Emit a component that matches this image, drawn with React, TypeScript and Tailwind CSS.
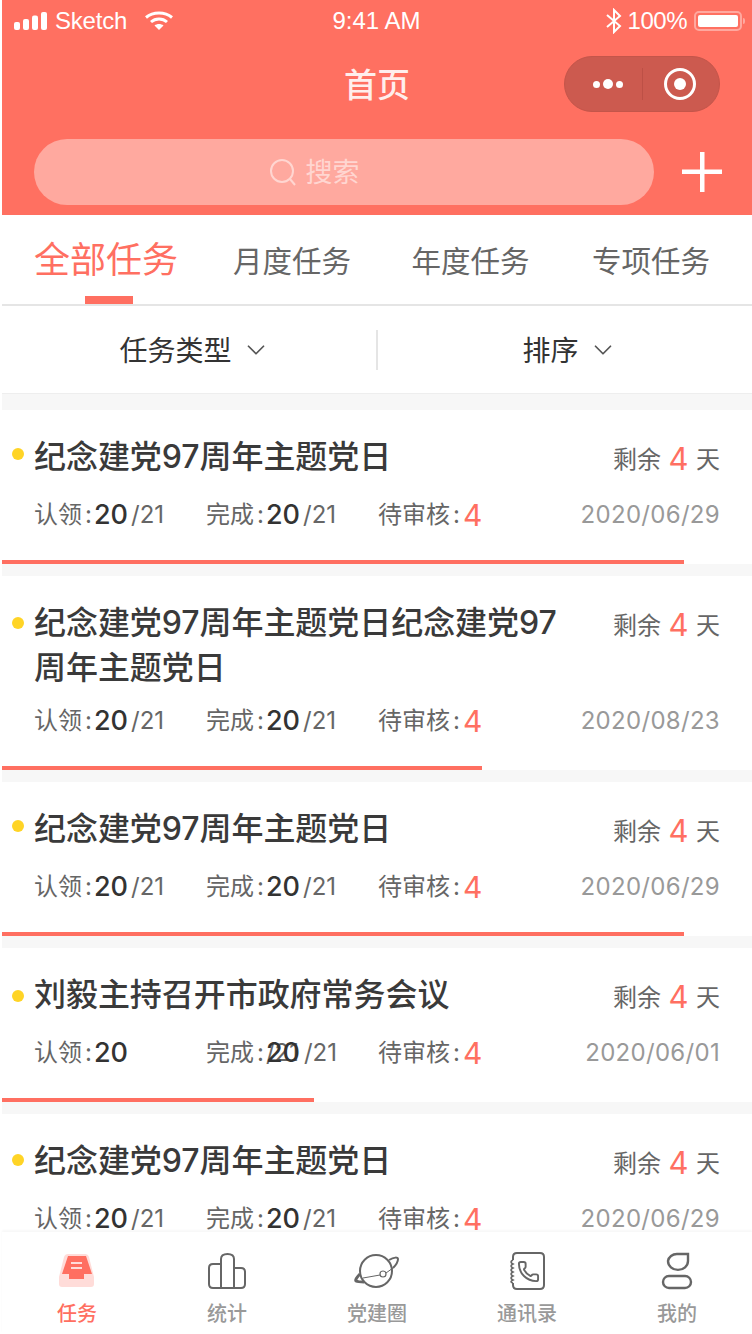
import { ChevronDown, Phone } from "lucide-react";

const fontStack = { fontFamily: '"Inter", "Noto Sans CJK SC", sans-serif' };

interface Task {
  id: number;
  title: string;
  date: string;
  barClass: string;
  dotClass: string;
  glitch?: boolean;
}

const tasks: Task[] = [
  { id: 1, title: "纪念建党97周年主题党日", date: "2020/06/29", barClass: "w-[682px]", dotClass: "top-[38px]" },
  { id: 2, title: "纪念建党97周年主题党日纪念建党97周年主题党日", date: "2020/08/23", barClass: "w-[480px]", dotClass: "top-[41px]" },
  { id: 3, title: "纪念建党97周年主题党日", date: "2020/06/29", barClass: "w-[682px]", dotClass: "top-[38px]" },
  { id: 4, title: "刘毅主持召开市政府常务会议", date: "2020/06/01", barClass: "w-[312px]", dotClass: "top-[42px]", glitch: true },
  { id: 5, title: "纪念建党97周年主题党日", date: "2020/06/29", barClass: "w-[682px]", dotClass: "top-[40px]" },
];

function StatusBar() {
  return (
    <div className="flex h-[40px] items-center justify-between pt-[2px] pl-[12px] pr-[7px] text-[24px] text-white" style={{ fontFamily: '"Liberation Sans", sans-serif' }}>
      <div className="flex w-[257px] items-center">
        <svg width="34" height="18" viewBox="0 0 34 18" fill="white">
          <rect x="0" y="10" width="6" height="8" rx="2" />
          <rect x="9" y="7" width="6" height="11" rx="2" />
          <rect x="18" y="3.5" width="6" height="14.5" rx="2" />
          <rect x="27" y="0" width="6" height="18" rx="2" />
        </svg>
        <span className="ml-[7px] tracking-[-0.2px]">Sketch</span>
        <svg className="ml-[17px]" width="30" height="20" viewBox="0 0 30 20" fill="none" stroke="white" strokeWidth="3">
          <path d="M2 6.5C9 0.5 21 0.5 28 6.5" />
          <path d="M7 11C11.5 7 18.5 7 23 11" />
          <path d="M15 19L10.5 14.5C13 12.5 17 12.5 19.5 14.5Z" fill="white" stroke="none" />
        </svg>
      </div>
      <span>9:41 AM</span>
      <div className="flex w-[263px] items-center justify-end">
        <svg width="18" height="26" viewBox="0 0 18 26" fill="none" stroke="white" strokeWidth="2">
          <path d="M2 7L15 18L9 24V2L15 8L2 19" />
        </svg>
        <span className="ml-[5px] tracking-[-0.5px]">100%</span>
        <div className="ml-[7px] flex h-[20px] w-[48px] items-center rounded-[5px] border-2 border-[#ffa89f] p-[2px]">
          <div className="h-full w-full rounded-[2px] bg-white" />
        </div>
        <div className="ml-[1px] h-[6px] w-[2px] rounded-r bg-[#ffa89f]" />
      </div>
    </div>
  );
}

function Capsule() {
  return (
    <div className="flex h-[56px] w-[156px] items-center rounded-full border border-[#c4554a] bg-[#cc5a4f]">
      <div className="flex w-[77px] items-center justify-end gap-[3px] pr-[19px]">
        <span className="h-[7px] w-[7px] rounded-full bg-white" />
        <span className="h-[10px] w-[10px] rounded-full bg-white" />
        <span className="h-[7px] w-[7px] rounded-full bg-white" />
      </div>
      <div className="h-[32px] w-px bg-[#bd5046]" />
      <div className="flex flex-1 justify-center pr-[2px]">
        <div className="flex h-[32px] w-[32px] items-center justify-center rounded-full border-[3px] border-white">
          <span className="h-[12px] w-[12px] rounded-full bg-white" />
        </div>
      </div>
    </div>
  );
}

function Header() {
  return (
    <header className="bg-[#ff7061]">
      <StatusBar />
      <div className="grid h-[88px] grid-cols-[1fr_auto_1fr] items-center px-[32px]">
        <div />
        <h1 className="pt-[4px] text-[33px] font-medium text-[#ffeeec]">首页</h1>
        <div className="flex justify-end">
          <Capsule />
        </div>
      </div>
      <div className="mt-[11px] flex h-[66px] items-center pl-[32px]">
        <div className="flex h-[66px] w-[620px] items-center justify-center rounded-full bg-[#ffa99f] pr-[58px]">
          <svg className="mr-[9px] -ml-[2px]" width="28" height="28" viewBox="0 0 28 28" fill="none" stroke="#ffd6d1" strokeWidth="2">
            <circle cx="13" cy="13" r="11" />
            <path d="M21 21L26 27" />
          </svg>
          <span className="pt-[3px] text-[27px] text-[#ffd6d1]">搜索</span>
        </div>
        <svg className="ml-[28px]" width="40" height="40" viewBox="0 0 40 40" fill="white">
          <rect x="0" y="17.5" width="40" height="4.5" />
          <rect x="18" y="0" width="4.5" height="40" />
        </svg>
      </div>
      <div className="h-[10px]" />
    </header>
  );
}

function Tabs() {
  return (
    <nav className="flex h-[91px] items-center gap-[60.5px] border-b-2 border-[#e5e5e5] pl-[32px] text-[29.5px] text-[#666]">
      <div className="relative flex h-full w-[144px] items-center pt-[1px] text-[36px] whitespace-nowrap text-[#ff6f61]">
        全部任务
        <span className="absolute bottom-0 left-[51px] h-[8px] w-[48px] bg-[#ff6f61]" />
      </div>
      <span className="-ml-[5.5px] pt-[3px] whitespace-nowrap">月度任务</span>
      <span className="pt-[3px] whitespace-nowrap">年度任务</span>
      <span className="ml-[2px] pt-[3px] whitespace-nowrap">专项任务</span>
    </nav>
  );
}

function Filters() {
  return (
    <div className="flex h-[88px] items-center border-b border-[#eeeeee] text-[28px] text-[#333]">
      <div className="flex w-[374px] items-center justify-center gap-[9px] pl-[12px]">
        <span className="pt-[2px]">任务类型</span>
        <ChevronDown className="h-[30px] w-[30px] text-[#555]" strokeWidth={1.4} />
      </div>
      <div className="h-[40px] w-[2px] bg-[#e5e5e5]" />
      <div className="flex w-[374px] items-center justify-center gap-[9px] pl-[10px]">
        <span className="pt-[2px]">排序</span>
        <ChevronDown className="h-[30px] w-[30px] text-[#555]" strokeWidth={1.4} />
      </div>
    </div>
  );
}

function Stat({ label, hideTotal, doubled }: { label: string; hideTotal?: boolean; doubled?: boolean }) {
  return (
    <div className="flex items-center text-[24px] text-[#666]">
      <span className="whitespace-nowrap">
        {label}
        <span className="ml-[3px]">:</span>
      </span>
      {doubled ? (
        <span className="relative ml-[2px] whitespace-nowrap text-[#666]">
          <span className="mr-[5px]">/21</span>/21
          <span className="absolute top-1/2 left-0 -translate-y-1/2 text-[27px] font-medium text-[#333]">20</span>
        </span>
      ) : (
        <>
          <span className="ml-[2px] text-[27px] font-medium text-[#333]">20</span>
          {!hideTotal && <span className="ml-[3px] whitespace-nowrap">/21</span>}
        </>
      )}
    </div>
  );
}

function TaskCard({ task }: { task: Task }) {
  return (
    <article className="relative bg-white">
      <span className={`absolute left-[10px] h-[12px] w-[12px] rounded-full bg-[#ffd426] ${task.dotClass}`} />
      <div className="flex items-start justify-between pt-[24px] pr-[32px] pl-[32px]">
        <h2 className="min-h-[50px] w-[530px] text-[32px] leading-[45px] font-medium tracking-[-0.05px] text-[#3a3a3a]">{task.title}</h2>
        <div className="mt-[3px] flex items-center text-[24px] leading-[45px] whitespace-nowrap text-[#666]">
          剩余<span className="mx-[7.5px] -mt-[3px] text-[31px] text-[#ff6f61]">4</span>天
        </div>
      </div>
      <div className="mt-[11px] flex h-[40px] items-center pr-[32px] pl-[32px]">
        <div className="w-[172px]">
          <Stat label="认领" hideTotal={task.glitch} />
        </div>
        <div className="w-[172px]">
          <Stat label="完成" doubled={task.glitch} />
        </div>
        <div className="flex items-center text-[24px] text-[#666]">
          <span className="whitespace-nowrap">
            待审核<span className="ml-[3px]">:</span>
          </span>
          <span className="ml-[3px] text-[30px] text-[#ff6f61]">4</span>
        </div>
        <span className="ml-auto text-[24px] tracking-[0.3px] text-[#999]">{task.date}</span>
      </div>
      <div className={`mt-[25px] h-[4px] bg-[#ff6f61] ${task.barClass}`} />
    </article>
  );
}

function TaskIcon() {
  return (
    <svg width="36" height="36" viewBox="0 0 36 36">
      <path d="M9 1H26Q29 1 30 4L35 24V31Q35 34 32 34H3Q0 34 0 31V24L5 4Q6 1 9 1Z" fill="#ffdcd9" />
      <path d="M9 3H27L33 21H25V26H10V21H3Z" fill="#ff6f61" />
      <rect x="12" y="9" width="11" height="2" fill="#ffdcd9" />
      <rect x="12" y="14" width="11" height="2" fill="#ffdcd9" />
    </svg>
  );
}

function StatsIcon() {
  return (
    <svg width="40" height="36" viewBox="0 0 40 36" fill="none" stroke="#666" strokeWidth="2">
      <path d="M14 35V6Q14 1 20.5 1Q27 1 27 6V35" />
      <path d="M14 11H6Q2 11 2 15V31Q2 35 6 35H34Q38 35 38 31V19Q38 15 34 15H27" />
    </svg>
  );
}

function PlanetIcon() {
  return (
    <svg width="46" height="36" viewBox="0 0 46 36" fill="none" stroke="#666" strokeWidth="2">
      <circle cx="22" cy="18" r="16" />
      <path d="M35 7C40 4 44 4 44 6C44 9 42 12 39 15" />
      <path d="M6 21C3 24 1 27 2 28C4 29 7 29 10 29" strokeWidth="3" />
      <path d="M9 25L26 22M32 20L39 15" strokeWidth="1" />
      <circle cx="29" cy="21" r="3" strokeWidth="1.2" fill="white" />
    </svg>
  );
}

function ContactsIcon() {
  return (
    <svg width="38" height="38" viewBox="0 0 38 38" fill="none" stroke="#666" strokeWidth="2">
      <path d="M5 8V5Q5 1 9 1H32Q36 1 36 5V33Q36 37 32 37H9Q5 37 5 33V31" />
      <path d="M5 8Q1 10 5 12Q1 14 5 16Q1 18 5 20Q1 22 5 24Q1 26 5 28Q1 30 5 31" strokeWidth="1.6" />
      <Phone x="9" y="8" width="23" height="23" stroke="#666" strokeWidth={2} />
    </svg>
  );
}

function MineIcon() {
  return (
    <svg width="32" height="38" viewBox="0 0 32 38" fill="none" stroke="#666" strokeWidth="2.4">
      <path d="M16 2H27V9A9 8 0 0 1 7 9A9 8 0 0 1 16 2Z" />
      <rect x="2" y="24" width="28" height="12" rx="6" />
    </svg>
  );
}

const tabItems = [
  { label: "任务", icon: <TaskIcon />, active: true },
  { label: "统计", icon: <StatsIcon /> },
  { label: "党建圈", icon: <PlanetIcon /> },
  { label: "通讯录", icon: <ContactsIcon /> },
  { label: "我的", icon: <MineIcon /> },
];

function TabBar() {
  return (
    <footer className="z-10 grid h-[102px] shrink-0 grid-cols-5 bg-white pt-[19px] shadow-[0_-2px_2px_rgba(0,0,0,0.03)]">
      {tabItems.map((item) => (
        <div key={item.label} className="flex flex-col items-center">
          <div className="flex h-[40px] items-center justify-center">{item.icon}</div>
          <span className={item.active ? "mt-[9px] text-[20px] leading-[28px] font-medium text-[#ff6f61]" : "mt-[9px] text-[20px] leading-[28px] font-medium text-[#999]"}>
            {item.label}
          </span>
        </div>
      ))}
    </footer>
  );
}

export default function App() {
  return (
    <div className="h-[1334px] w-[752px] overflow-hidden bg-white pl-[2px]" style={fontStack}>
      <div className="flex h-full flex-col">
        <Header />
        <Tabs />
        <Filters />
        <main className="flex min-h-0 flex-1 flex-col gap-[12px] overflow-hidden bg-[#f7f7f7] pt-[16px]">
          {tasks.map((task) => (
            <TaskCard key={task.id} task={task} />
          ))}
        </main>
        <TabBar />
      </div>
    </div>
  );
}
